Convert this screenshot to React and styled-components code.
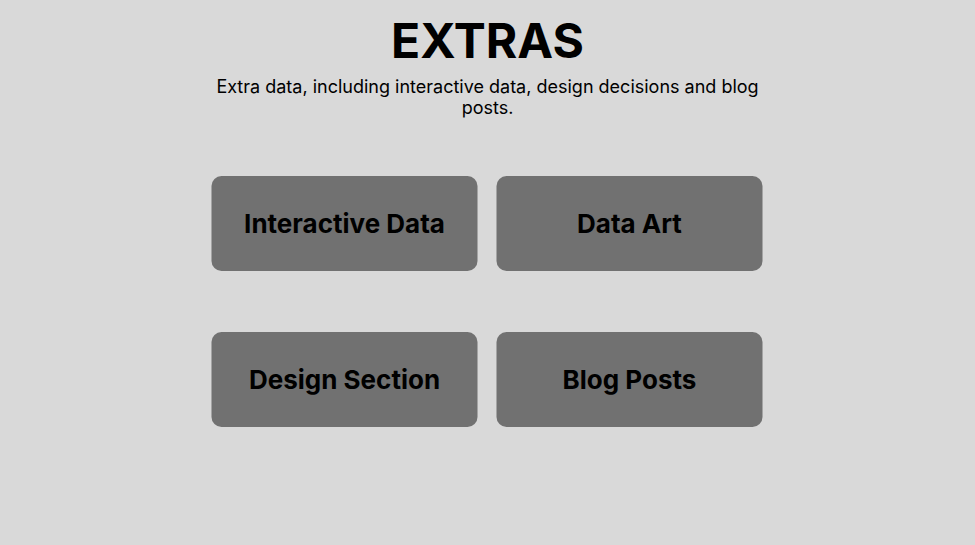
import React from 'react';
import styled, { createGlobalStyle } from 'styled-components';

const GlobalStyle = createGlobalStyle`
  html, body {
    margin: 0;
    padding: 0;
    background-color: #d9d9d9;
    font-family: Inter, "Noto Sans", sans-serif;
  }
`;

const Page = styled.div`
  display: flex;
  flex-direction: column;
  align-items: center;
  padding-top: 12px;
  min-height: 545px;
  box-sizing: border-box;
`;

const Title = styled.h1`
  margin: 0;
  font-size: 48px;
  font-weight: 700;
  color: #000;
  line-height: 58px;
`;

const Subtitle = styled.p`
  margin: 6px 0 0;
  max-width: 550px;
  text-align: center;
  font-size: 18px;
  line-height: 21px;
  color: #000;
`;

const CardGrid = styled.div`
  display: grid;
  grid-template-columns: repeat(2, 266px);
  grid-auto-rows: 95px;
  column-gap: 19px;
  row-gap: 61px;
  margin-top: 58px;
  transform: translateX(-0.5px);
`;

const Card = styled.a`
  display: flex;
  align-items: center;
  justify-content: center;
  background-color: #717171;
  border-radius: 10px;
  color: #000;
  text-decoration: none;
  font-size: 26px;
  font-weight: 700;
  cursor: pointer;
`;

const links = ['Interactive Data', 'Data Art', 'Design Section', 'Blog Posts'];

const App = () => {
  return (
    <>
      <GlobalStyle />
      <Page>
        <Title>EXTRAS</Title>
        <Subtitle>
          Extra data, including interactive data, design decisions and blog posts.
        </Subtitle>
        <CardGrid>
          {links.map((label) => (
            <Card key={label}>{label}</Card>
          ))}
        </CardGrid>
      </Page>
    </>
  );
};

export default App;
